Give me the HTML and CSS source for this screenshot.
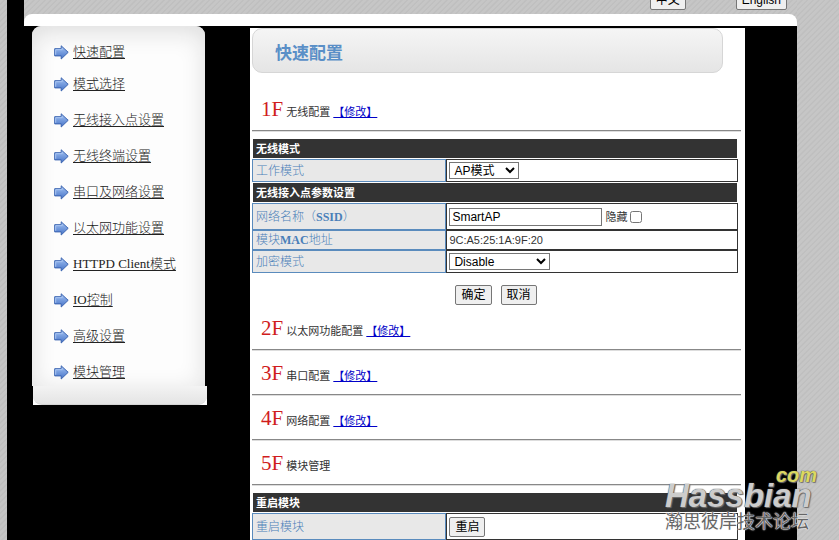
FILE: index.html
```html
<!DOCTYPE html>
<html lang="zh-CN">
<head>
    <meta charset="UTF-8">
    <meta name="viewport" content="width=device-width, initial-scale=1.0">
    <title>快速配置</title>
    <link rel="stylesheet" href="styles.css">
</head>
<body>
<svg class="symbols" width="0" height="0" aria-hidden="true">
    <defs>
        <linearGradient id="arrow-fill" x1="0" y1="0" x2="0" y2="1">
            <stop offset="0" stop-color="#a3c3f2"/>
            <stop offset="1" stop-color="#4673c8"/>
        </linearGradient>
        <symbol id="arrow" viewBox="0 0 15 15">
            <path d="M.7 3.7h6.5V.8L14.2 7.3l-7 6.7v-3.1H.7z" fill="url(#arrow-fill)" stroke="#3b64b0"/>
            <path d="M1.7 9.8V4.7h6.5V3.1" fill="none" stroke="#a9c6f2"/>
        </symbol>
    </defs>
</svg>

<div class="page">
    <div class="header">
        <div class="lang">
            <button type="button">中文</button>
            <button type="button">English</button>
        </div>
        <div class="header-bar"></div>
    </div>

    <div class="main">
        <!-- Side menu -->
        <div class="side">
            <ul class="menu">
                <li><svg><use href="#arrow"/></svg><a href="#">快速配置</a></li>
                <li><svg><use href="#arrow"/></svg><a href="#">模式选择</a></li>
                <li><svg><use href="#arrow"/></svg><a href="#">无线接入点设置</a></li>
                <li><svg><use href="#arrow"/></svg><a href="#">无线终端设置</a></li>
                <li><svg><use href="#arrow"/></svg><a href="#">串口及网络设置</a></li>
                <li><svg><use href="#arrow"/></svg><a href="#">以太网功能设置</a></li>
                <li><svg><use href="#arrow"/></svg><a href="#">HTTPD Client模式</a></li>
                <li><svg><use href="#arrow"/></svg><a href="#">IO控制</a></li>
                <li><svg><use href="#arrow"/></svg><a href="#">高级设置</a></li>
                <li><svg><use href="#arrow"/></svg><a href="#">模块管理</a></li>
            </ul>
            <div class="menu-foot"><div></div></div>
        </div>

        <!-- Settings -->
        <div class="content">
            <h1>快速配置</h1>

            <form>
                <div class="step"><b>1F</b> 无线配置 <a href="#">【修改】</a></div>
                <hr>
                <table>
                    <colgroup><col class="col-name"><col></colgroup>
                    <tr><th colspan="2">无线模式</th></tr>
                    <tr class="row">
                        <td class="name"><label for="mode">工作模式</label></td>
                        <td><select id="mode" class="mode"><option>AP模式</option></select></td>
                    </tr>
                    <tr><th colspan="2">无线接入点参数设置</th></tr>
                    <tr class="row-tall">
                        <td class="name"><label for="ssid">网络名称（<b>SSID</b>）</label></td>
                        <td>
                            <div class="field">
                                <input type="text" id="ssid" value="SmartAP">
                                <label for="hide">隐藏</label>
                                <input type="checkbox" id="hide">
                            </div>
                        </td>
                    </tr>
                    <tr class="row-short">
                        <td class="name">模块<b>MAC</b>地址</td>
                        <td>9C:A5:25:1A:9F:20</td>
                    </tr>
                    <tr class="row">
                        <td class="name"><label for="security">加密模式</label></td>
                        <td><select id="security" class="security"><option>Disable</option></select></td>
                    </tr>
                </table>
                <div class="actions">
                    <button type="submit">确定</button>
                    <button type="reset">取消</button>
                </div>
            </form>

            <div class="step"><b>2F</b> 以太网功能配置 <a href="#">【修改】</a></div>
            <hr>
            <div class="step"><b>3F</b> 串口配置 <a href="#">【修改】</a></div>
            <hr>
            <div class="step"><b>4F</b> 网络配置 <a href="#">【修改】</a></div>
            <hr>
            <div class="step"><b>5F</b> 模块管理</div>
            <hr>
            <table>
                <colgroup><col class="col-name"><col></colgroup>
                <tr><th colspan="2">重启模块</th></tr>
                <tr class="row-tall">
                    <td class="name">重启模块</td>
                    <td><button type="button">重启</button></td>
                </tr>
            </table>
        </div>
    </div>
</div>

<div class="watermark">
    <span class="mark-com">com</span>
    <span class="mark-name">Hassbian</span>
    <span class="mark-sub">瀚思彼岸技术论坛</span>
</div>
</body>
</html>
```
FILE: styles.css
```css
* {
    box-sizing: border-box;
}

body {
    margin: 0;
    min-height: 100vh;
    font-family: "Liberation Sans", "Noto Sans CJK SC", sans-serif;
    font-size: 11px;
    color: #333;
    background: repeating-linear-gradient(135deg, #c6c6c6 0, #c6c6c6 2px, #bebebe 3px, #c2c2c2 4px);
}

.symbols {
    position: absolute;
}

.page {
    min-height: 100vh;
    margin: 0 42px 0 7px;
    background: #000;
}

button {
    height: 20px;
    padding: 0 5px;
    font-family: inherit;
    font-size: 12px;
    line-height: 16px;
    color: #000;
    background: #efefef;
    border: 1px solid #767676;
    border-radius: 2px;
}

/* Header */
.header {
    margin-left: 17px;
    background: repeating-linear-gradient(135deg, #c6c6c6 0, #c6c6c6 2px, #bebebe 3px, #c2c2c2 4px);
}

.lang {
    display: flex;
    justify-content: flex-end;
    align-items: flex-end;
    gap: 50px;
    height: 14px;
    padding: 0 10px 4px 0;
    overflow: hidden;
}

.lang button {
    flex-shrink: 0;
}

.header-bar {
    height: 12px;
    background: #fff;
    border-radius: 8px 8px 0 0;
}

.main {
    display: flex;
    align-items: flex-start;
    padding: 0 52px 0 25px;
}

/* Side menu */
.side {
    flex: 0 0 175px;
    margin-right: 43px;
}

.menu {
    list-style: none;
    width: 173px;
    margin: 0;
    padding: 12px 0 0 22px;
    background: #fdfdfd;
    border-radius: 9px 9px 0 0;
    box-shadow: inset 0 6px 24px #ddd;
}

.menu li {
    display: flex;
    align-items: center;
    gap: 4px;
    height: 36px;
}

.menu li:first-child {
    height: 28px;
}

.menu li:last-child {
    height: 32px;
    padding-top: 4px;
}

.menu svg {
    width: 15px;
    height: 15px;
}

.menu a {
    font-family: "Liberation Serif", "Noto Sans CJK SC", serif;
    font-size: 13px;
    font-weight: 300;
    line-height: 18px;
    color: #222;
    white-space: nowrap;
    text-underline-offset: 2px;
}

.menu-foot {
    margin-left: 1px;
    background: #fff;
}

.menu-foot div {
    height: 19px;
    background: linear-gradient(#f3f3f3, #e4e4e4);
    border-bottom: 1px solid #d4d4d4;
    border-radius: 0 0 9px 9px;
}

/* Content */
.content {
    flex: 1;
    min-width: 0;
    margin-top: 2px;
    padding: 0 4px 0 2px;
    background: #fff;
}

h1 {
    height: 45px;
    margin: 0 18px 14px 0;
    padding-left: 22px;
    font-size: 17px;
    line-height: 50px;
    color: #5a8fc7;
    background: linear-gradient(#f5f5f5, #e5e5e5);
    border: 1px solid #d6d6d6;
    border-radius: 10px;
}

.step {
    height: 43px;
    padding-left: 9px;
    line-height: 45px;
    white-space: nowrap;
}

.step b {
    font-family: "Liberation Serif", serif;
    font-size: 21px;
    font-weight: normal;
    color: #d01c1c;
}

.step a {
    color: #0000c8;
}

hr {
    height: 2px;
    margin: 0;
    border: 0;
    border-top: 1px solid #888;
    border-bottom: 1px solid #ddd;
}

table {
    width: calc(100% - 3px);
    margin-top: 6px;
    table-layout: fixed;
    border-collapse: separate;
    border-spacing: 0;
}

.col-name {
    width: 40%;
}

th {
    height: 21px;
    padding: 0 3px;
    text-align: left;
    line-height: 16px;
    color: #fff;
    background: #333;
    border: 1px solid #fff;
}

td {
    padding: 0 2px;
    line-height: 16px;
    border: 1px solid #333;
}

td.name {
    padding-left: 3px;
    font-family: "Liberation Serif", "Noto Sans CJK SC", serif;
    font-size: 12px;
    font-weight: 300;
    color: #4a7fb8;
    background: #e8e8e8;
    border-color: #5a8bbd;
}

td.name b {
    font-weight: bold;
}

.row {
    height: 23px;
}

.row-tall {
    height: 27px;
}

.row-short {
    height: 20px;
}

select,
input[type="text"] {
    height: 17px;
    padding: 0 2px;
    font-family: inherit;
    font-size: 12px;
    color: #000;
    background: #fff;
    border: 1px solid #767676;
    border-radius: 0;
}

select {
    display: block;
    padding: 0;
}

.mode {
    width: 70px;
}

.security {
    width: 101px;
}

.field {
    display: flex;
    align-items: center;
    gap: 3px;
}

input[type="text"] {
    width: 153px;
    height: 18px;
}

input[type="checkbox"] {
    width: 12px;
    height: 12px;
    margin: 0;
}

td button {
    display: block;
}

.actions {
    display: flex;
    justify-content: center;
    gap: 9px;
    padding: 12px 1px 1px 0;
}

/* Site mark over the lower right corner */
.watermark {
    position: absolute;
    right: 22px;
    top: 468px;
    display: flex;
    flex-direction: column;
    width: 152px;
    color: #ccc;
    text-shadow: 0 0 1px #555, 0 0 1px #555, 1px 1px 1px #777;
}

.mark-com {
    align-self: flex-end;
    font-size: 20px;
    font-style: italic;
    font-weight: bold;
    line-height: 15px;
    color: #dcd860;
}

.mark-name {
    font-size: 33px;
    font-style: italic;
    font-weight: bold;
    line-height: 26px;
}

.mark-sub {
    font-size: 18px;
    line-height: 26px;
    white-space: nowrap;
    color: #666;
    text-shadow: 0 0 1px #fff, 0 0 1px #fff, 0 0 2px #eee;
}
```
